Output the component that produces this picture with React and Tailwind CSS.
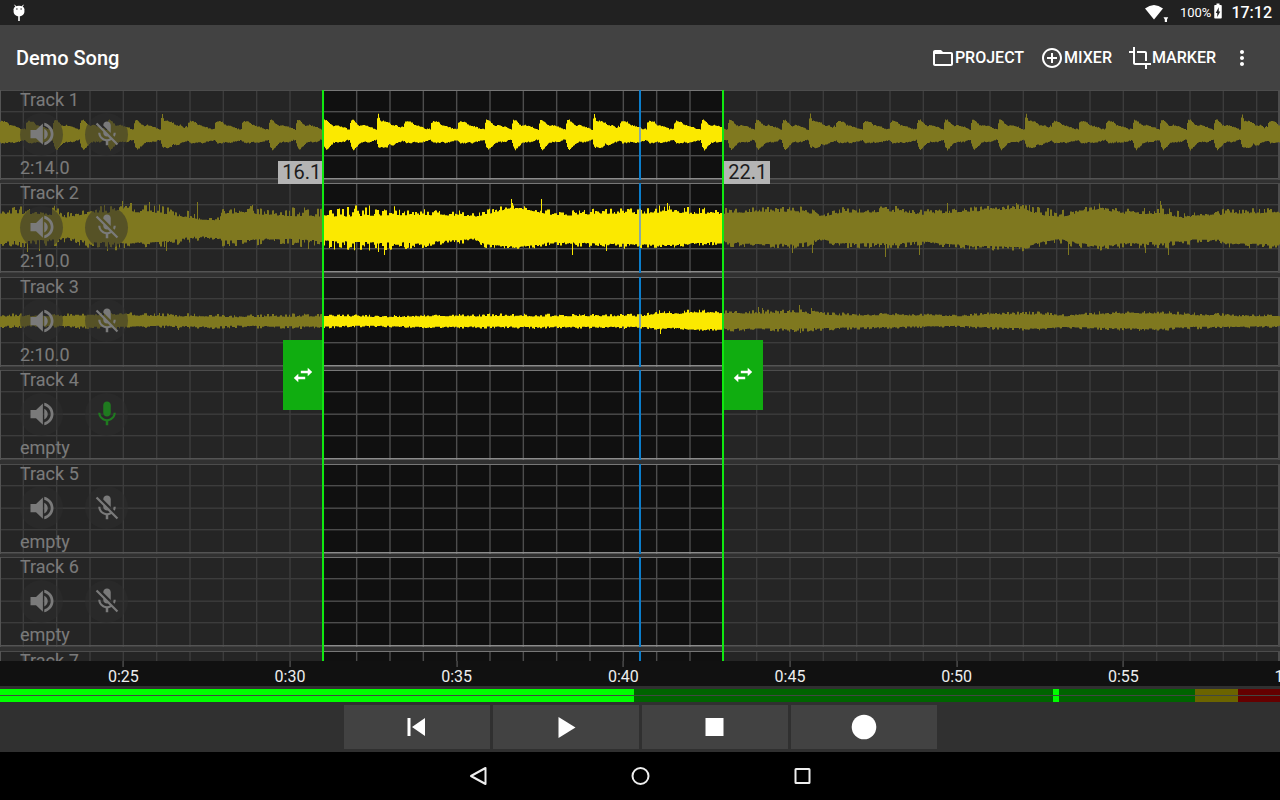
import {
  MdAddCircleOutline,
  MdBatteryChargingFull,
  MdCrop,
  MdFolderOpen,
  MdMic,
  MdMicOff,
  MdMoreVert
} from 'react-icons/md';

// Visible time window, in seconds
const VIEW_START = 21.3;
const VIEW_LENGTH = 38.4;
const LOOP_START = 31;
const LOOP_END = 43;
const PLAYHEAD = 40.5;

const LANE_W = 1280;
const LANE_H = 90;
const MID = 44;

const toPercent = (t) => `${((t - VIEW_START) / VIEW_LENGTH) * 100}%`;
const toX = (t) => ((t - VIEW_START) / VIEW_LENGTH) * LANE_W;

const tracks = [
  { name: 'Track 1', info: '2:14.0', wave: 'drums' },
  { name: 'Track 2', info: '2:10.0', wave: 'guitar' },
  { name: 'Track 3', info: '2:10.0', wave: 'bass' },
  { name: 'Track 4', info: 'empty', armed: true },
  { name: 'Track 5', info: 'empty' },
  { name: 'Track 6', info: 'empty' },
  { name: 'Track 7', info: 'empty' }
];

const timeLabels = [
  { t: 25, text: '0:25' },
  { t: 30, text: '0:30' },
  { t: 35, text: '0:35' },
  { t: 40, text: '0:40' },
  { t: 45, text: '0:45' },
  { t: 50, text: '0:50' },
  { t: 55, text: '0:55' },
  { t: 60, text: '1:00' }
];

// Small deterministic hash noise, 0..1
const noise = (n) => {
  const s = Math.sin(n * 127.1 + 11.7) * 43758.5453;
  return s - Math.floor(s);
};

// Linear interpolation over a list of [x, value...] points
const lookup = (points, x, col) => {
  for (let i = 1; i < points.length; i++) {
    if (x <= points[i][0]) {
      const a = points[i - 1];
      const b = points[i];
      return a[col] + ((b[col] - a[col]) * (x - a[0])) / (b[0] - a[0]);
    }
  }
  return points[points.length - 1][col];
};

// One hit is 27px long: [offset, up, down]
const HIT_SPIKE = [[0, 16, 10], [1, 20, 13], [2, 16, 14], [3, 13, 13], [6, 13, 14], [10, 12, 13], [12, 11, 10], [14, 9, 11], [17, 8, 11], [19, 9, 9], [23, 6, 8], [25, 8, 7], [27, 6, 7]];
const HIT_SOFT = [[0, 11, 7], [2, 13, 9], [7, 12, 9], [10, 9, 8], [14, 8, 9], [18, 7, 8], [22, 5, 7], [27, 5, 6]];
const HIT_HARD = [[0, 11, 9], [1, 14, 13], [3, 14, 16], [5, 12, 14], [8, 9, 11], [10, 8, 9], [13, 9, 8], [16, 8, 8], [20, 7, 8], [24, 5, 6], [27, 4, 6]];
const BAR = [HIT_SPIKE, HIT_SOFT, HIT_SOFT, HIT_SOFT, HIT_HARD, HIT_HARD, HIT_HARD, HIT_HARD];

// [x, up, down, noise]
const GUITAR = [
  [0, 14, 15, 5], [30, 14, 15, 8], [58, 13, 13, 9], [66, 10, 11, 5], [90, 15, 16, 8], [125, 16, 17, 9],
  [160, 15, 16, 8], [182, 11, 12, 7], [200, 8, 10, 5], [219, 7, 10, 3], [221, 14, 14, 7], [250, 15, 14, 8],
  [270, 12, 12, 5], [290, 12, 13, 8], [323, 12, 15, 10], [350, 12, 16, 11], [385, 13, 17, 9], [425, 13, 16, 7],
  [455, 12, 14, 6], [475, 11, 12, 4], [485, 13, 18, 5], [512, 19, 20, 4], [530, 17, 19, 4], [550, 13, 16, 5],
  [570, 12, 16, 5], [600, 14, 17, 5], [640, 14, 18, 6], [670, 16, 19, 7], [690, 14, 17, 6], [723, 14, 15, 6],
  [760, 16, 18, 5], [800, 15, 17, 6], [812, 14, 15, 5], [820, 10, 12, 2], [840, 15, 17, 6], [900, 16, 17, 6],
  [922, 13, 15, 5], [950, 15, 18, 5], [1022, 19, 21, 5], [1040, 13, 16, 8], [1060, 11, 13, 8], [1075, 14, 16, 6],
  [1100, 19, 20, 5], [1120, 14, 17, 6], [1160, 14, 16, 8], [1188, 9, 15, 6], [1192, 12, 13, 3], [1218, 12, 13, 4],
  [1225, 14, 17, 6], [1280, 15, 18, 5]
];
const GUITAR_UP = { 14: 20, 122: 26, 149: 25, 197: 25, 252: 22, 511: 28, 512: 24, 541: 28, 667: 24, 947: 24, 1016: 24, 1160: 26, 1161: 22 };
const GUITAR_DOWN = { 27: 25, 39: 24, 107: 24, 166: 24, 308: 22, 378: 25, 384: 28, 572: 28, 606: 24, 792: 26, 812: 26, 885: 30, 919: 28, 1068: 28, 1145: 26, 1168: 28 };

const BASS = [
  [0, 5, 5, 3], [60, 5, 5, 2], [80, 6, 6, 3], [120, 6, 6, 3], [170, 5, 5, 3], [210, 5, 6, 3], [230, 4, 5, 3],
  [323, 5, 6, 3], [345, 5, 5, 2], [390, 4, 5, 2], [430, 5, 6, 2], [520, 5, 6, 3], [600, 5, 6, 2], [640, 5, 6, 3],
  [660, 8, 8, 3], [675, 7, 7, 3], [692, 9, 9, 3], [723, 8, 8, 3], [760, 8, 8, 4], [800, 8, 8, 4],
  [840, 6, 7, 3], [900, 6, 6, 2], [960, 5, 5, 2], [1000, 7, 7, 3], [1040, 7, 8, 3], [1065, 5, 6, 2],
  [1095, 7, 7, 3], [1150, 8, 8, 3], [1175, 7, 7, 3], [1200, 6, 6, 3], [1240, 5, 6, 2], [1280, 5, 5, 2]
];
const BASS_UP = { 758: 14, 762: 13, 799: 16, 811: 13 };
const BASS_DOWN = { 178: 9, 660: 13, 800: 12 };

const level = (kind, x) => {
  if (kind === 'drums') {
    const pos = (((x - 161) % 216) + 216) % 216;
    const hit = BAR[Math.floor(pos / 27)];
    const off = pos % 27;
    return [lookup(hit, off, 1) + noise(x) - 0.5, lookup(hit, off, 2) + noise(x + 999) - 0.5];
  }
  const points = kind === 'guitar' ? GUITAR : BASS;
  const upPeaks = kind === 'guitar' ? GUITAR_UP : BASS_UP;
  const downPeaks = kind === 'guitar' ? GUITAR_DOWN : BASS_DOWN;
  const n = lookup(points, x, 3);
  const step = Math.floor(x * 0.6);
  const up = lookup(points, x, 1) + n * (1.1 * noise(step + 17) ** 2 - 0.15);
  const down = lookup(points, x, 2) + n * (0.9 * noise(step + 4321) ** 2 - 0.15);
  return [upPeaks[x] || up, downPeaks[x] || down];
};

const wavePath = (kind) => {
  let top = '';
  let bottom = '';
  for (let x = 0; x < LANE_W; x++) {
    const [up, down] = level(kind, x);
    const y1 = (MID - up).toFixed(1);
    const y2 = (MID + down).toFixed(1);
    top += `L${x} ${y1}H${x + 1}`;
    bottom = `L${x + 1} ${y2}H${x}` + bottom;
  }
  return `M0 ${MID}${top}${bottom}Z`;
};

const waves = {
  drums: wavePath('drums'),
  guitar: wavePath('guitar'),
  bass: wavePath('bass')
};

const gridSeconds = Array.from({ length: 38 }, (_, i) => 22 + i);

function VolumeIcon() {
  return (
    <svg width="30" height="30" viewBox="0 0 24 24" fill="currentColor" aria-hidden="true">
      <path d="M2.800 8.700v6.600h4.400l5.500 5.200V3.500L7.200 8.700z" />
      <path d="M13.800 7.700c1.700.8 2.800 2.400 2.800 4.300s-1.100 3.500-2.800 4.300z" />
      <path d="M13.800 3v2.300c3 .9 5.200 3.500 5.200 6.700s-2.200 5.800-5.200 6.700V21c4.200-1 7.400-4.600 7.400-9s-3.200-8-7.400-9z" />
    </svg>
  );
}

function SwapIcon() {
  return (
    <svg width="24" height="24" viewBox="0 0 24 24" fill="currentColor" aria-hidden="true">
      <path d="M7.300 10.700 2.800 15l4.500 4.300v-3h6.900v-2.600H7.300zM21.200 9l-4.500-4.300v3H9.800v2.600h6.900v3z" />
    </svg>
  );
}

function Lane({ wave }) {
  const playX = toX(PLAYHEAD) - 1;
  const [up, down] = wave ? level(wave, Math.round(playX)) : [0, 0];

  return (
    <svg
      className="absolute inset-x-0 top-0 h-[90px] w-full"
      viewBox={`0 0 ${LANE_W} ${LANE_H}`}
      preserveAspectRatio="none"
      aria-hidden="true"
    >
      <rect width={LANE_W} height={LANE_H} fill="#101010" />
      <g fill="#4d4d4d">
        {gridSeconds.map((t) => (
          <rect key={t} x={toX(t) - 0.7} y="0" width="1.4" height={LANE_H} />
        ))}
        <rect y="21" width={LANE_W} height="1.4" />
        <rect y="43.500" width={LANE_W} height="1.4" />
        <rect y="65" width={LANE_W} height="1.4" />
      </g>
      <rect width={LANE_W} height="1" fill="#777" />
      <rect y="88" width={LANE_W} height="1.600" fill="#8c8c8c" />
      <rect width="1" height={LANE_H} fill="#8c8c8c" />
      <rect x="1278" width="2" height={LANE_H} fill="#777" />
      <rect x={playX} width="2" height={LANE_H} fill="#0b7dcb" />
      {wave && <path d={waves[wave]} fill="#fbe900" />}
      {wave && <rect x={playX} y={MID - up} width="2" height={up + down} fill="#86a9a6" />}
    </svg>
  );
}

function Track({ track }) {
  return (
    <li className="relative">
      <Lane wave={track.wave} />
      <div className="relative flex h-[88px] flex-col justify-between pl-5 text-[18px] leading-5 text-[#eee]">
        <span>{track.name}</span>
        <div className="flex gap-[22px]">
          <button
            type="button"
            aria-label={`${track.name} volume`}
            className="flex size-[43px] items-center justify-center rounded-full bg-[#252525]/50"
          >
            <VolumeIcon />
          </button>
          <button
            type="button"
            aria-label={`${track.name} record`}
            className="flex size-[43px] items-center justify-center rounded-full bg-[#252525]/50"
          >
            {track.armed ? <MdMic size={30} className="text-[#00f000]" /> : <MdMicOff size={30} />}
          </button>
        </div>
        <span>{track.info}</span>
      </div>
    </li>
  );
}

function LoopMarker({ time, label, side }) {
  const isStart = side === 'start';
  return (
    <div className="absolute inset-y-0 w-0" style={{ left: toPercent(time) }}>
      <span
        className={
          isStart
            ? 'absolute right-0 top-[71px] bg-[#b4b4b4] pl-1 pr-0.5 text-[20px] leading-[23px] text-[#1c1c1c]'
            : 'absolute left-0 top-[71px] bg-[#b4b4b4] pl-[5px] pr-[3px] text-[20px] leading-[23px] text-[#1c1c1c]'
        }
      >
        {label}
      </span>
      <div
        className={
          isStart
            ? 'absolute inset-y-0 right-0 flex items-center pb-0.5'
            : 'absolute inset-y-0 left-0 flex items-center pb-0.5'
        }
      >
        <button
          type="button"
          aria-label={isStart ? 'Move loop start' : 'Move loop end'}
          className="flex h-[70px] w-10 items-center justify-center bg-[#10ad10] text-white"
        >
          <SwapIcon />
        </button>
      </div>
      <div className="absolute inset-y-0 -left-px w-[2px] bg-[#10e810]" />
    </div>
  );
}

function StatusBar() {
  return (
    <div className="flex h-[25px] shrink-0 items-center justify-between bg-[#212121] pl-[13px] pr-2 text-white">
      <svg width="12" height="18" viewBox="0 0 12 18" fill="#fff" aria-hidden="true">
        <path d="M1.6.8 3 3M10.4.8 9 3" stroke="#fff" strokeWidth="1" />
        <path d="M.6 5.200C.6 3 3 1.800 6 1.800S11.400 3 11.400 5.200V7.500C11.400 10.500 9 12.300 6 12.300S.6 10.500.6 7.500Z" />
        <rect x="5.200" y="12" width="1.600" height="5" />
        <circle cx="3.900" cy="5" r=".7" fill="#212121" />
        <circle cx="8.100" cy="5" r=".7" fill="#212121" />
      </svg>
      <div className="flex items-center font-medium">
        <svg width="24" height="18" viewBox="0 0 24 18" fill="#fff" aria-hidden="true">
          <path d="M0 4.500Q9 -2.500 18 4.500L9 15.500Z" />
          <path d="M18.500 13.200H23.200L22 15.500V18H19.800V15.500Z" />
        </svg>
        <span className="ml-[11px] text-[13px] font-normal">100%</span>
        <MdBatteryChargingFull size={18} className="-ml-0.5 mb-1" />
        <span className="ml-1 text-[16px]">17:12</span>
      </div>
    </div>
  );
}

function AppBar() {
  return (
    <header className="flex h-[65px] shrink-0 items-center justify-between bg-[#424242] pl-4 pr-[26px] text-white">
      <h1 className="text-[20px] font-medium">Demo Song</h1>
      <nav className="flex items-center gap-4 text-[16px] font-medium">
        <button type="button" className="flex items-center">
          <MdFolderOpen size={24} />
          PROJECT
        </button>
        <button type="button" className="flex items-center">
          <MdAddCircleOutline size={24} />
          MIXER
        </button>
        <button type="button" className="flex items-center">
          <MdCrop size={24} />
          MARKER
        </button>
        <button type="button" aria-label="More options" className="-ml-0.5">
          <MdMoreVert size={24} />
        </button>
      </nav>
    </header>
  );
}

function Timeline() {
  return (
    <div className="relative h-[25px] shrink-0 overflow-hidden bg-[#111] text-[16px] leading-5 text-[#eee]">
      {timeLabels.map((label) => (
        <div
          key={label.t}
          className="absolute top-0 flex -translate-x-1/2 flex-col items-center"
          style={{ left: toPercent(label.t) }}
        >
          <span className="h-[6px] w-px bg-[#666]" />
          <span>{label.text}</span>
        </div>
      ))}
    </div>
  );
}

function MeterBar({ value, peak }) {
  return (
    <div className="relative flex h-[6px]">
      <div className="h-full grow bg-[#006400]" />
      <div className="h-full w-[43px] bg-[#6b6400]" />
      <div className="h-full w-[42px] bg-[#650000]" />
      <div className="absolute inset-y-0 left-0 bg-[#00ff00]" style={{ width: `${value}%` }} />
      <div className="absolute inset-y-0 w-[6px] bg-[#00ff00]" style={{ left: `${peak}%` }} />
    </div>
  );
}

function TransportButton({ label, children }) {
  return (
    <button
      type="button"
      aria-label={label}
      className="flex h-11 w-[146px] items-center justify-center bg-[#424242] text-white"
    >
      <svg width="28" height="28" viewBox="0 0 28 28" fill="currentColor">
        {children}
      </svg>
    </button>
  );
}

function NavButton({ label, children }) {
  return (
    <button type="button" aria-label={label} className="flex size-12 items-center justify-center">
      <svg width="24" height="24" viewBox="0 0 24 24" fill="none" stroke="#eee" strokeWidth="2">
        {children}
      </svg>
    </button>
  );
}

export default function App() {
  return (
    <div className="flex h-screen flex-col overflow-hidden bg-[#303030] font-[Roboto,sans-serif]">
      <StatusBar />
      <AppBar />

      <main className="relative min-h-0 flex-1 overflow-hidden">
        <ul className="grid h-[654px] grid-rows-7">
          {tracks.map((track) => (
            <Track key={track.name} track={track} />
          ))}
        </ul>

        {/* Everything outside the loop is dimmed */}
        <div
          className="pointer-events-none absolute inset-y-0 left-0 bg-[#323232]/62"
          style={{ width: toPercent(LOOP_START) }}
        />
        <div
          className="pointer-events-none absolute inset-y-0 right-0 bg-[#323232]/62"
          style={{ left: toPercent(LOOP_END) }}
        />

        <LoopMarker time={LOOP_START} label="16.1" side="start" />
        <LoopMarker time={LOOP_END} label="22.1" side="end" />
      </main>

      <Timeline />

      <div className="mt-[3px] flex shrink-0 flex-col gap-px bg-[#424842]">
        <MeterBar value={49.5} peak={82.3} />
        <MeterBar value={49.5} peak={82.3} />
      </div>

      <div className="flex shrink-0 justify-center gap-[3px] pb-[3px] pt-[3px]">
        <TransportButton label="Back to start">
          <path d="M4.500 5h3v18h-3zM22 5v18L9 14z" />
        </TransportButton>
        <TransportButton label="Play">
          <path d="M6.500 4v21L23.500 14.500z" />
        </TransportButton>
        <TransportButton label="Stop">
          <path d="M4.500 5h18v18h-18z" />
        </TransportButton>
        <TransportButton label="Record">
          <circle cx="14" cy="14" r="12.300" />
        </TransportButton>
      </div>

      <div className="flex h-12 shrink-0 items-center justify-center gap-[114px] bg-black">
        <NavButton label="Back">
          <path d="M19.500 4v16L5 12z" strokeLinejoin="round" />
        </NavButton>
        <NavButton label="Home">
          <circle cx="12.500" cy="12" r="8" />
        </NavButton>
        <NavButton label="Recent apps">
          <rect x="5.500" y="5" width="14" height="14" rx=".5" />
        </NavButton>
      </div>
    </div>
  );
}
